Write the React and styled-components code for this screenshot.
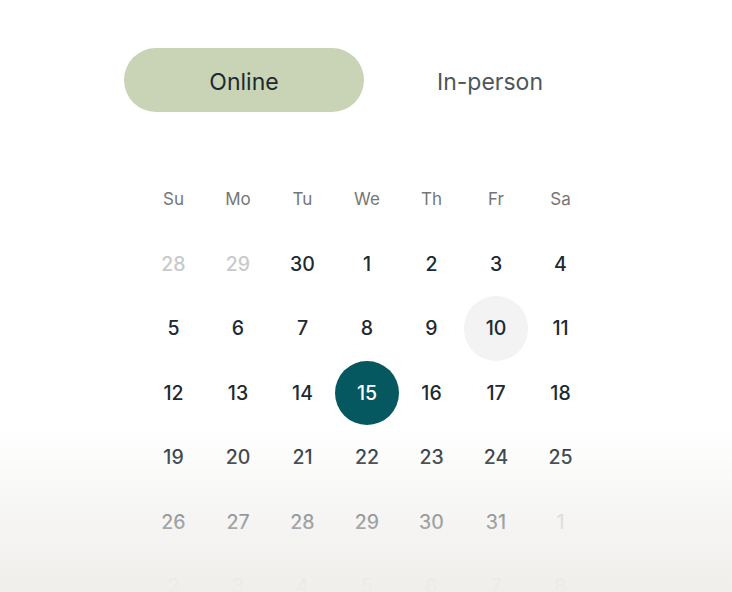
import React, { useState } from "react";
import styled, { createGlobalStyle } from "styled-components";

const GlobalStyle = createGlobalStyle`
  html, body {
    margin: 0;
    padding: 0;
    background: #ffffff;
    overflow: hidden;
  }
  body {
    font-family: "Inter", "Liberation Sans", sans-serif;
    -webkit-font-smoothing: antialiased;
  }
`;

const Page = styled.div`
  position: relative;
  width: 732px;
  height: 592px;
  overflow: hidden;
  display: flex;
  flex-direction: column;
  align-items: center;
`;

const Toggle = styled.div`
  margin-top: 48px;
  margin-left: 2px;
  display: grid;
  grid-template-columns: 240px 240px;
  gap: 6px;
`;

const ToggleOption = styled.button`
  height: 64px;
  border: none;
  border-radius: 32px;
  background: ${(p) => (p.$active ? "#c9d4b6" : "transparent")};
  color: ${(p) => (p.$active ? "#1d2b2e" : "#4c575b")};
  font-family: inherit;
  font-size: 23px;
  font-weight: 400;
  cursor: pointer;
  padding: 3px 0 0;
`;

const Calendar = styled.div`
  margin-top: 55px;
  margin-left: 2px;
  display: grid;
  grid-template-columns: repeat(7, 64.5px);
  grid-auto-rows: 64.5px;
`;

const Weekday = styled.div`
  display: flex;
  align-items: center;
  justify-content: center;
  font-size: 17px;
  color: #767676;
`;

const Day = styled.div`
  display: flex;
  align-items: center;
  justify-content: center;
  font-size: 19.5px;
  font-weight: 450;
  border-radius: 50%;
  color: ${(p) =>
    p.$selected ? "#ffffff" : p.$muted ? "#c9c9c9" : "#1c2a31"};
  background: ${(p) =>
    p.$selected ? "#05585f" : p.$today ? "#f3f3f3" : "transparent"};
`;

// soft fade over the lower weeks
const Fade = styled.div`
  position: absolute;
  left: 0;
  right: 0;
  top: 424px;
  bottom: 0;
  pointer-events: none;
  background: linear-gradient(
    to bottom,
    rgba(239, 238, 235, 0) 0%,
    rgba(239, 238, 235, 0.16) 19%,
    rgba(239, 238, 235, 0.6) 57%,
    rgba(239, 238, 235, 0.97) 100%
  );
`;

const weekdays = ["Su", "Mo", "Tu", "We", "Th", "Fr", "Sa"];

const days = [
  [28, true], [29, true], [30], [1], [2], [3], [4],
  [5], [6], [7], [8], [9], [10], [11],
  [12], [13], [14], [15], [16], [17], [18],
  [19], [20], [21], [22], [23], [24], [25],
  [26], [27], [28], [29], [30], [31], [1, true],
  [2, true], [3, true], [4, true], [5, true], [6, true], [7, true], [8, true],
];

const App = () => {
  const [mode, setMode] = useState("online");

  return (
    <Page>
      <GlobalStyle />
      <Toggle>
        <ToggleOption $active={mode === "online"} onClick={() => setMode("online")}>
          Online
        </ToggleOption>
        <ToggleOption $active={mode === "person"} onClick={() => setMode("person")}>
          In-person
        </ToggleOption>
      </Toggle>
      <Calendar>
        {weekdays.map((w) => (
          <Weekday key={w}>{w}</Weekday>
        ))}
        {days.map(([d, muted], i) => (
          <Day
            key={i}
            $muted={muted}
            $today={!muted && d === 10}
            $selected={!muted && d === 15}
          >
            {d}
          </Day>
        ))}
      </Calendar>
      <Fade />
    </Page>
  );
};

export default App;
